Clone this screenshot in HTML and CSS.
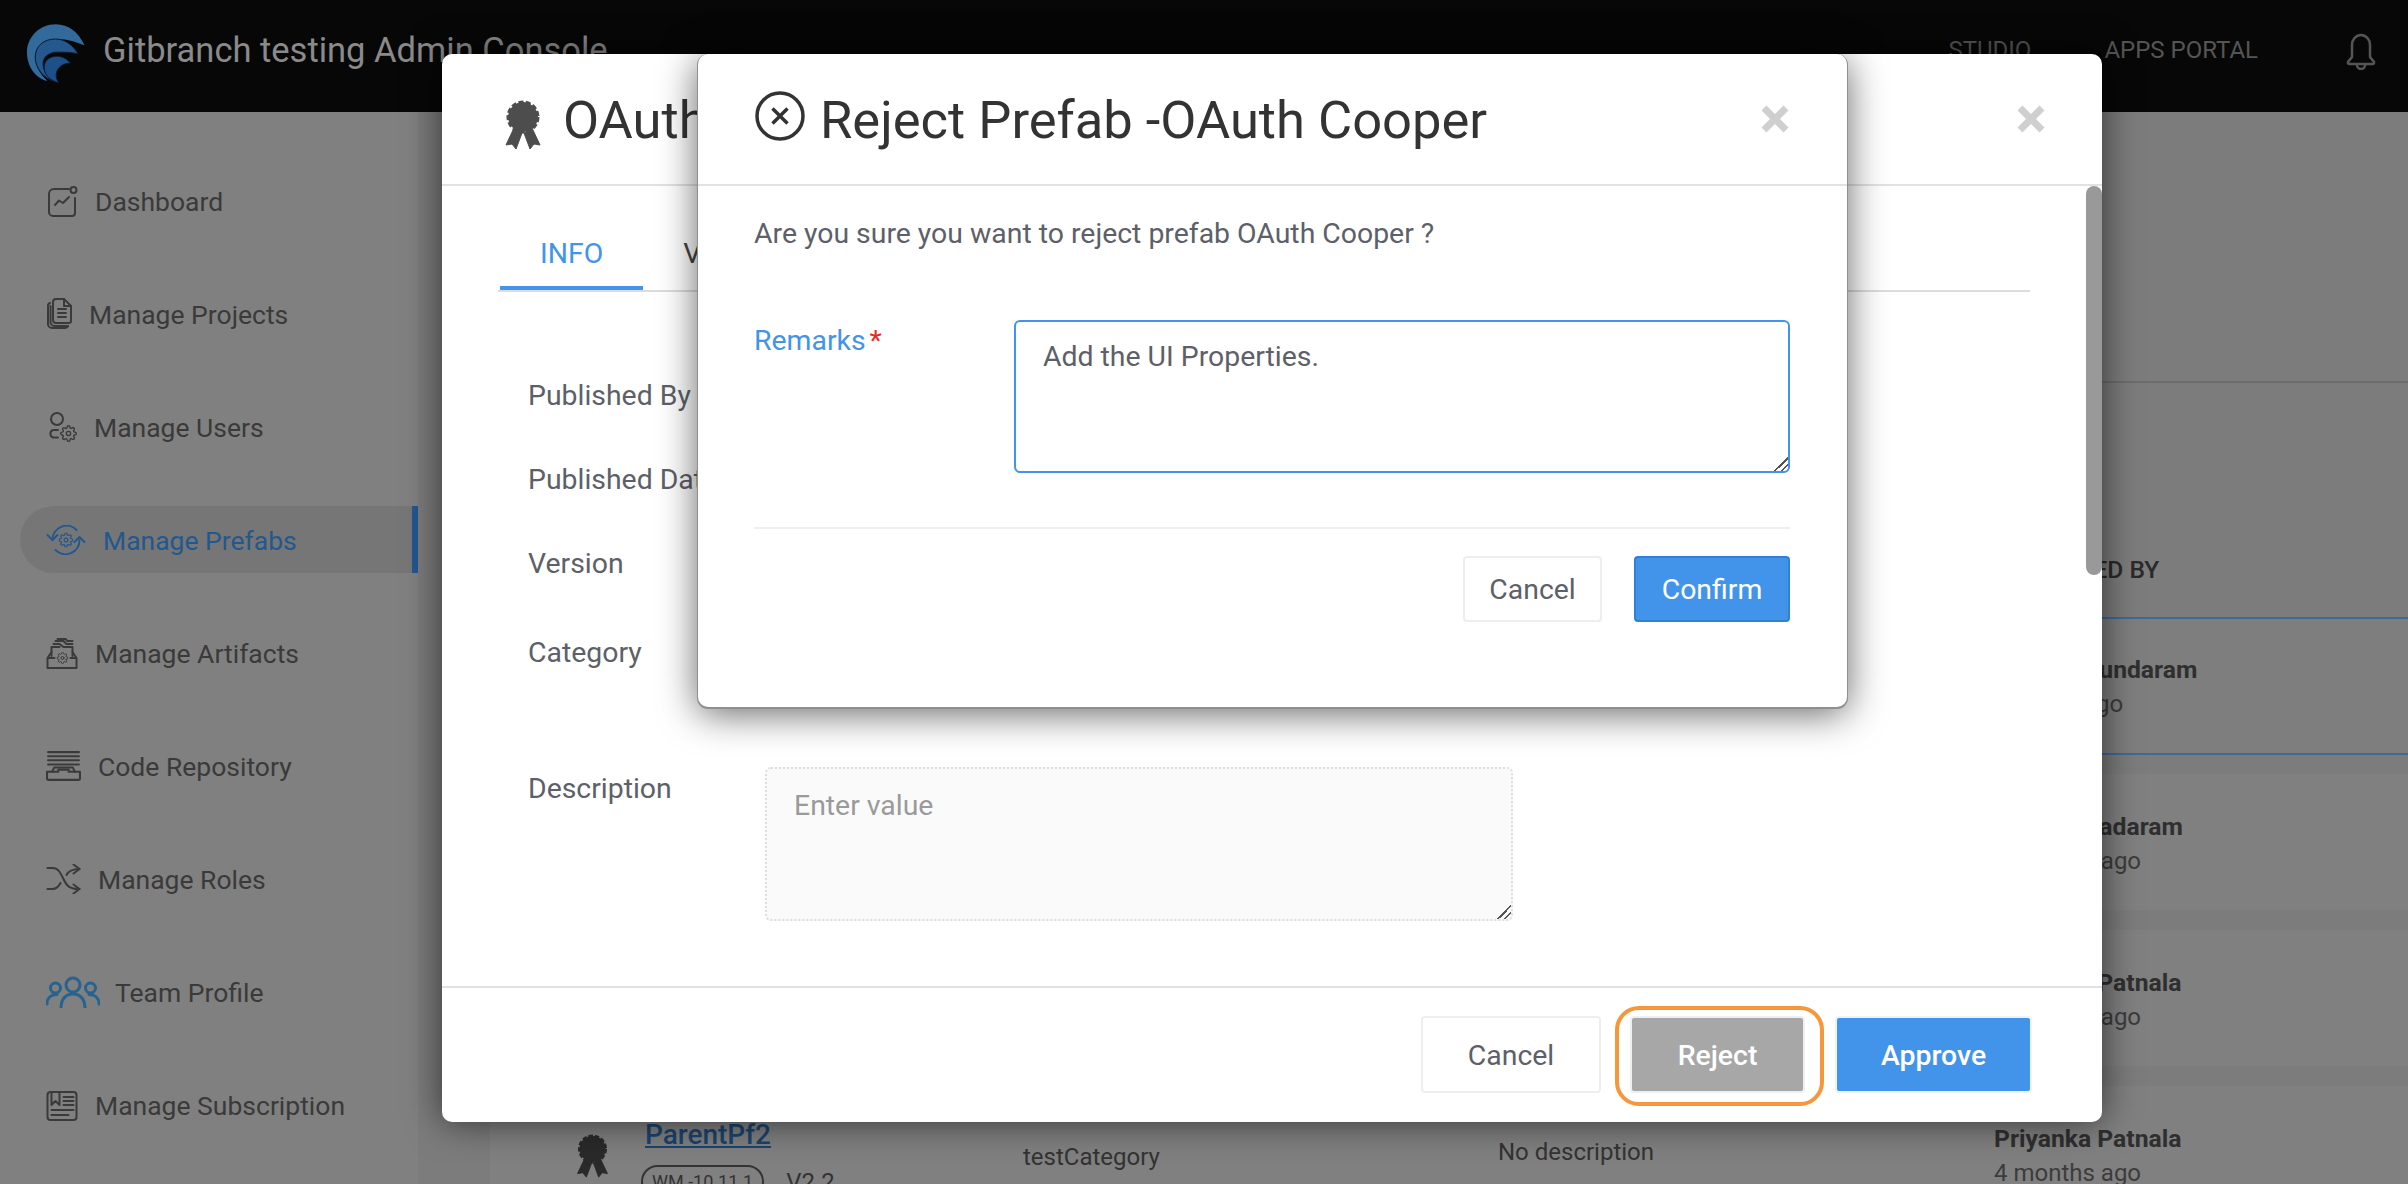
FILE: index.html
```html
<!DOCTYPE html>
<html lang="en">
<head>
    <meta charset="UTF-8">
    <title>Gitbranch testing Admin Console</title>
    <link rel="stylesheet" href="styles.css">
</head>
<body>
    <svg class="defs" width="0" height="0">
        <symbol id="gear" viewBox="0 0 24 24">
            <circle cx="12" cy="12" r="3"/>
            <path d="M19.4 15a1.65 1.65 0 0 0 .33 1.82l.06.06a2 2 0 0 1 0 2.83 2 2 0 0 1-2.83 0l-.06-.06a1.65 1.65 0 0 0-1.82-.33 1.65 1.65 0 0 0-1 1.51V21a2 2 0 0 1-2 2 2 2 0 0 1-2-2v-.09A1.65 1.65 0 0 0 9 19.4a1.65 1.65 0 0 0-1.82.33l-.06.06a2 2 0 0 1-2.83 0 2 2 0 0 1 0-2.83l.06-.06a1.65 1.65 0 0 0 .33-1.82 1.65 1.65 0 0 0-1.51-1H3a2 2 0 0 1-2-2 2 2 0 0 1 2-2h.09A1.65 1.65 0 0 0 4.6 9a1.65 1.65 0 0 0-.33-1.82l-.06-.06a2 2 0 0 1 0-2.83 2 2 0 0 1 2.83 0l.06.06a1.65 1.65 0 0 0 1.82.33H9a1.65 1.65 0 0 0 1-1.51V3a2 2 0 0 1 2-2 2 2 0 0 1 2 2v.09a1.65 1.65 0 0 0 1 1.51 1.65 1.65 0 0 0 1.82-.33l.06-.06a2 2 0 0 1 2.83 0 2 2 0 0 1 0 2.83l-.06.06a1.65 1.65 0 0 0-.33 1.82V9a1.65 1.65 0 0 0 1.51 1H21a2 2 0 0 1 2 2 2 2 0 0 1-2 2h-.09a1.65 1.65 0 0 0-1.51 1z"/>
        </symbol>
        <symbol id="ribbon" viewBox="0 0 42 50">
            <circle cx="21" cy="17" r="14.5"/>
            <circle class="scallop" cx="21" cy="17" r="15"/>
            <path d="M12 28 L4 45 L10 44 L14 49 L20 33 Z"/>
            <path d="M30 28 L38 45 L32 44 L28 49 L22 33 Z"/>
        </symbol>
    </svg>

    <header class="topbar">
        <div class="brand">
            <svg class="logo" viewBox="30 37 182 184">
                <path fill="#336a9c" d="M208 105 C190 65 160 40 120 40 C70 40 33 80 33 125 C33 170 60 205 95 212 C70 190 55 160 60 130 C65 100 95 85 125 85 C155 85 185 95 208 105Z"/>
                <path fill="#24588f" stroke="#0b1a2a" stroke-width="3" d="M188 130 C170 100 145 85 120 85 C85 85 58 105 58 140 C58 175 85 205 118 215 C95 200 80 180 82 155 C85 135 105 125 125 125 C145 125 170 125 188 130Z"/>
                <path fill="#1d5088" stroke="#0b1a2a" stroke-width="3" d="M165 158 C150 140 130 135 115 138 C95 142 85 155 85 172 C85 195 105 212 130 218 C120 205 118 190 128 175 C135 165 150 158 165 158Z"/>
            </svg>
            <span class="brand-name">Gitbranch testing Admin Console</span>
        </div>
        <nav class="topnav">
            <a class="topnav-link">STUDIO</a>
            <a class="topnav-link">APPS PORTAL</a>
            <svg class="bell" viewBox="0 0 30 37">
                <path d="M6 24 V12 a9 10 0 0 1 18 0 V24 L28 29 a1.5 1.5 0 0 1 -1 2 H3 a1.5 1.5 0 0 1 -1 -2 Z"/>
                <path d="M11 32 a4 4 0 0 0 8 0"/>
            </svg>
        </nav>
    </header>

    <div class="layout">
        <aside class="sidebar">
            <a class="side-link">
                <svg class="ico ico-dash" viewBox="0 0 30 31">
                    <path d="M22 3 H7 a5 5 0 0 0 -5 5 V26 a4 4 0 0 0 4 4 H25 a3 3 0 0 0 3 -3 V12"/>
                    <circle cx="26.5" cy="4" r="3"/>
                    <path d="M8 19 L12 14.5 L16 17 L22 11"/>
                </svg>
                Dashboard
            </a>
            <a class="side-link">
                <svg class="ico ico-proj" viewBox="0 0 26 32">
                    <path d="M10 1 H18 L25 8 V23 a2 2 0 0 1 -2 2 H10 a3 3 0 0 1 -3 -3 V4 a3 3 0 0 1 3 -3 Z"/>
                    <path d="M18 1 V8 H25"/>
                    <path d="M12 11 H20 M12 15 H20 M12 19 H20"/>
                    <path d="M4 5 a3 3 0 0 0 -2 3 V26 a4 4 0 0 0 4 4 H19 a3 3 0 0 0 3 -2"/>
                    <path d="M4.5 8 V24 a4 4 0 0 0 4 4 H22"/>
                </svg>
                Manage Projects
            </a>
            <a class="side-link">
                <svg class="ico ico-user" viewBox="0 0 31 30">
                    <circle cx="11" cy="7" r="6"/>
                    <path d="M12 18 H7 a4 4 0 0 0 0 7.5 H12"/>
                    <use href="#gear" x="14" y="13" width="17" height="17"/>
                </svg>
                Manage Users
            </a>
            <a class="side-link side-link-active">
                <svg class="ico ico-prefab" viewBox="0 0 39 30">
                    <path d="M6 15 A14 14 0 0 1 30 5"/>
                    <path d="M1 10 L6 15 L11 10"/>
                    <path d="M33 15 A14 14 0 0 1 9 25"/>
                    <path d="M28 17 L33 12 L38 17"/>
                    <use href="#gear" x="12" y="7.5" width="15" height="15"/>
                </svg>
                Manage Prefabs
            </a>
            <a class="side-link">
                <svg class="ico ico-dash" viewBox="0 0 31 31">
                    <path d="M1 20 V30 H30 V20 H24 M1 20 H8 M1 20 L5 14 M30 20 L26 14"/>
                    <path d="M5 18 V9 H13 M26 18 V9 H17 L13 6 H7"/>
                    <path d="M9 3 H17 L20 6 H26 M11 1 H19 L21 3 H26"/>
                    <use href="#gear" x="10" y="14" width="12" height="12"/>
                </svg>
                Manage Artifacts
            </a>
            <a class="side-link">
                <svg class="ico ico-code" viewBox="0 0 34 29">
                    <path d="M2 1 H32 M2 5 H32 M2 9 H32 M2 13 H32"/>
                    <path d="M1 20 H12 V18 H22 V20 H33 V27 a1 1 0 0 1 -1 1 H2 a1 1 0 0 1 -1 -1 Z"/>
                    <path d="M6 20 L8 16 H26 L28 20"/>
                </svg>
                Code Repository
            </a>
            <a class="side-link">
                <svg class="ico ico-code" viewBox="0 0 34 30">
                    <path d="M1 4 H6 C12 4 14 9 17 15 C20 22 23 25 33 25"/>
                    <path d="M1 25 H6 C10 25 12 23 14 19"/>
                    <path d="M20 11 C22 7 25 5 33 5"/>
                    <path d="M27 0.5 L33 5 L27 9.5"/>
                    <path d="M27 20.5 L33 25 L27 29.5"/>
                </svg>
                Manage Roles
            </a>
            <a class="side-link">
                <svg class="ico ico-team" viewBox="0 0 54 32">
                    <circle cx="27" cy="9" r="7"/>
                    <path d="M15 32 C15 23 20 18 27 18 C34 18 39 23 39 32"/>
                    <circle cx="9.5" cy="12" r="5"/>
                    <path d="M1 28 C1 22 5 18.5 11 18.5"/>
                    <circle cx="44.5" cy="12" r="5"/>
                    <path d="M53 28 C53 22 49 18.5 43 18.5"/>
                </svg>
                Team Profile
            </a>
            <a class="side-link">
                <svg class="ico ico-dash" viewBox="0 0 31 31">
                    <rect x="1" y="2" width="29" height="28" rx="3"/>
                    <path d="M5 2 V15 L9 11 L13 15 V2"/>
                    <path d="M17 7 H27 M17 11 H27 M17 15 H27 M5 20 H27 M5 25 H22"/>
                </svg>
                Manage Subscription
            </a>
        </aside>

        <main class="content">
            <div class="content-head"></div>
            <div class="table-head">PUBLISHED BY</div>
            <div class="prefab-row prefab-row-active">
                <div class="by-cell">
                    <div class="by-name">Priyank Sundaram</div>
                    <div class="by-time">12 days ago</div>
                </div>
            </div>
            <div class="prefab-row">
                <div class="by-cell">
                    <div class="by-name">Priyank Sadaram</div>
                    <div class="by-time">4 months ago</div>
                </div>
            </div>
            <div class="prefab-row">
                <div class="by-cell">
                    <div class="by-name">Priyanka Patnala</div>
                    <div class="by-time">4 months ago</div>
                </div>
            </div>
            <div class="prefab-row">
                <div class="name-cell">
                    <svg class="row-ribbon"><use href="#ribbon"/></svg>
                    <div>
                        <a class="prefab-link">ParentPf2</a>
                        <div class="prefab-meta">
                            <span class="pill">WM -10.11.1</span>
                            <span class="prefab-ver">V2.2</span>
                        </div>
                    </div>
                </div>
                <div class="cat-cell">testCategory</div>
                <div class="desc-cell">No description</div>
                <div class="by-cell">
                    <div class="by-name">Priyanka Patnala</div>
                    <div class="by-time">4 months ago</div>
                </div>
            </div>
        </main>
    </div>

    <!-- prefab details dialog -->
    <section class="modal modal-outer">
        <div class="modal-head">
            <div class="modal-title">
                <svg class="title-ribbon"><use href="#ribbon"/></svg>
                <h2 class="title-text">OAuth Cooper</h2>
            </div>
            <svg class="close-x" viewBox="0 0 28 28"><path d="M3 3 L25 25 M25 3 L3 25"/></svg>
        </div>
        <div class="outer-body">
            <div class="tabs">
                <a class="tab tab-active">INFO</a>
                <a class="tab">VERSIONS</a>
            </div>
            <div class="info-form">
                <div class="info-row"><label class="info-label">Published By</label></div>
                <div class="info-row"><label class="info-label">Published Date</label></div>
                <div class="info-row"><label class="info-label">Version</label></div>
                <div class="info-row info-row-cat">
                    <label class="info-label">Category</label>
                    <div class="cat-box"></div>
                </div>
                <div class="info-row">
                    <label class="info-label info-label-desc">Description</label>
                    <textarea class="desc-input" placeholder="Enter value"></textarea>
                </div>
            </div>
        </div>
        <div class="outer-foot">
            <button class="btn btn-plain btn-foot-cancel">Cancel</button>
            <button class="btn btn-reject">Reject</button>
            <button class="btn btn-approve">Approve</button>
        </div>
        <div class="scroll-thumb"></div>
    </section>

    <!-- reject confirmation -->
    <section class="modal modal-inner">
        <div class="modal-head">
            <div class="modal-title">
                <svg class="title-circle" viewBox="0 0 50 50">
                    <circle cx="25" cy="25" r="23"/>
                    <path d="M17.5 17.5 L32.5 32.5 M32.5 17.5 L17.5 32.5"/>
                </svg>
                <h2 class="title-text">Reject Prefab -OAuth Cooper</h2>
            </div>
            <svg class="close-x" viewBox="0 0 28 28"><path d="M3 3 L25 25 M25 3 L3 25"/></svg>
        </div>
        <div class="inner-body">
            <p class="confirm-msg">Are you sure you want to reject prefab OAuth Cooper ?</p>
            <div class="remarks-row">
                <label class="remarks-label">Remarks<span class="req">*</span></label>
                <textarea class="remarks-input">Add the UI Properties.</textarea>
            </div>
            <div class="inner-foot">
                <button class="btn btn-plain btn-small-cancel">Cancel</button>
                <button class="btn btn-confirm">Confirm</button>
            </div>
        </div>
    </section>
</body>
</html>
```

FILE: styles.css
```css
* {
    box-sizing: border-box;
}
html, body {
    margin: 0;
    height: 1184px;
    overflow: hidden;
}
body {
    font-family: Roboto, "Liberation Sans", sans-serif;
    background-color: #808080;
    color: #3a3a3a;
}
.defs {
    position: absolute;
}
.scallop {
    fill: none;
    stroke: inherit;
    stroke-width: 3;
    stroke-dasharray: 5 2.3;
}

/* top bar */
.topbar {
    height: 112px;
    background-color: #070707;
    display: flex;
    align-items: center;
    justify-content: space-between;
    padding: 0 32px 0 26px;
}
.brand {
    display: flex;
    align-items: center;
    gap: 17px;
}
.logo {
    width: 60px;
    height: 61px;
    margin-top: -6px;
}
.brand-name {
    font-size: 34.5px;
    color: #8a8a8a;
    margin-top: -12px;
}
.topnav {
    display: flex;
    align-items: center;
}
.topnav-link {
    font-size: 24px;
    color: #555;
    margin-right: 73px;
    margin-top: -12px;
}
.topnav-link + .topnav-link {
    margin-right: 88px;
}
.bell {
    width: 30px;
    height: 37px;
    margin-top: -10px;
    fill: none;
    stroke: #555;
    stroke-width: 2.5;
}

/* sidebar */
.layout {
    display: flex;
    height: 1072px;
}
.sidebar {
    width: 418px;
    flex: none;
    padding: 55px 0 0 20px;
}
.side-link {
    display: flex;
    align-items: center;
    gap: 17px;
    height: 67px;
    margin-bottom: 46px;
    padding: 1px 0 0 26px;
    font-size: 26.5px;
    color: #3a3a3a;
}
.side-link-active {
    background-color: #767676;
    border-right: 6px solid #23578f;
    border-radius: 34px 0 0 34px;
    color: #23588f;
}
.ico {
    fill: none;
    stroke: #3a3a3a;
    stroke-width: 2;
    stroke-linecap: round;
    stroke-linejoin: round;
    flex: none;
}
.ico-dash {
    width: 32px;
    height: 31px;
}
.ico-proj {
    width: 26px;
    height: 32px;
}
.ico-user {
    width: 31px;
    height: 30px;
}
.ico-prefab {
    width: 40px;
    height: 30px;
    stroke: #23588f;
}
.ico-code {
    width: 35px;
    height: 30px;
}
.ico-team {
    width: 54px;
    height: 32px;
    margin-right: -2px;
    stroke: #26648f;
    stroke-width: 3;
}

/* list behind the dialogs */
.content {
    flex: 1;
    background-color: #7c7c7c;
    padding-left: 72px;
    min-width: 0;
}
.content-head {
    height: 271px;
    border-bottom: 2px solid #6c6c6c;
}
.table-head {
    height: 234px;
    padding: 172px 0 0 1504px;
    font-size: 24.5px;
    font-weight: 500;
    color: #2a2a2a;
    line-height: 30px;
}
.prefab-row {
    display: grid;
    grid-template-columns: 533px 475px 496px 1fr;
    height: 136px;
    margin-bottom: 20px;
    background-color: #808080;
}
.prefab-row-active {
    border-top: 2px solid #3f6a96;
    border-bottom: 2px solid #3f6a96;
    height: 138px;
    margin-bottom: 19px;
    background-color: #7e7e7e;
}
.by-cell {
    grid-column: 4;
    padding-top: 38px;
}
.prefab-row-active .by-cell {
    padding-top: 36px;
}
.by-name {
    font-size: 24.7px;
    font-weight: 700;
    line-height: 30px;
    color: #2f2f2f;
}
.by-time {
    font-size: 24px;
    line-height: 38px;
    color: #3c3c3c;
}
.name-cell {
    display: flex;
    padding: 32px 0 0 84px;
    gap: 30px;
}
.row-ribbon {
    width: 37px;
    height: 46px;
    margin-top: 15px;
    fill: #2a2a2a;
    stroke: #2a2a2a;
}
.prefab-link {
    font-size: 28px;
    font-weight: 500;
    line-height: 34px;
    color: #1b4470;
    text-decoration: underline;
    display: block;
    margin-left: 4px;
}
.prefab-meta {
    display: flex;
    align-items: center;
    gap: 22px;
    margin-top: 13px;
}
.pill {
    border: 2px solid #333;
    border-radius: 20px;
    font-size: 18px;
    padding: 4px 9px;
    color: #333;
    white-space: nowrap;
}
.prefab-ver {
    font-size: 24px;
    color: #333;
}
.cat-cell {
    padding-top: 56px;
    font-size: 24px;
    line-height: 30px;
    color: #333;
}
.desc-cell {
    padding-top: 51px;
    font-size: 24px;
    line-height: 30px;
    color: #333;
}

/* dialogs */
.modal {
    position: absolute;
    top: 54px;
    background-color: #fff;
    border-radius: 10px;
    display: flex;
    flex-direction: column;
    overflow: hidden;
}
.modal-outer {
    left: 442px;
    width: 1660px;
    height: 1068px;
    box-shadow: 0 0 36px rgba(0, 0, 0, 0.6);
    overflow: visible;
}
.modal-inner {
    left: 698px;
    width: 1149px;
    height: 653px;
    box-shadow: 0 1px 0 1px #8f8f8f, 0 6px 38px rgba(0, 0, 0, 0.62);
}
.modal-head {
    height: 132px;
    flex: none;
    border-bottom: 2px solid #e2e2e2;
    display: flex;
    align-items: center;
    justify-content: space-between;
    padding: 0 58px 0 57px;
}
.modal-outer .modal-head {
    padding: 0 57px 0 60px;
}
.modal-title {
    display: flex;
    align-items: center;
}
.title-text {
    margin: 2px 0 0;
    font-size: 52.5px;
    font-weight: 400;
    color: #333;
    line-height: 60px;
    white-space: nowrap;
}
.title-ribbon {
    width: 42px;
    height: 50px;
    margin: 12px 19px 0 0;
    fill: #4d4d4d;
    stroke: #4d4d4d;
}
.title-circle {
    width: 50px;
    height: 50px;
    margin: -6px 15px 0 0;
    fill: none;
    stroke: #333;
    stroke-width: 3.5;
}
.close-x {
    width: 28px;
    height: 28px;
    fill: none;
    stroke: #cfcfcf;
    stroke-width: 7;
}

/* details dialog */
.outer-body {
    flex: 1;
    padding: 0 72px 0 56px;
}
.tabs {
    height: 106px;
    padding-left: 2px;
    display: flex;
    align-items: flex-end;
    border-bottom: 2px solid #dcdcdc;
    position: relative;
}
.tab {
    font-size: 28.4px;
    line-height: 40px;
    height: 70px;
    padding: 14px 40px 0;
    color: #444;
}
.tab-active {
    color: #4194e9;
    border-bottom: 4px solid #4194e9;
}
.info-form {
    padding: 84px 0 0 30px;
}
.info-row {
    display: flex;
    height: 84px;
}
.info-row-cat {
    height: 139px;
    padding-top: 5px;
}
.info-label {
    width: 237px;
    flex: none;
    font-size: 28.4px;
    line-height: 40px;
    color: #5d6068;
}
.info-label-desc {
    padding-top: 2px;
}
.cat-box {
    width: 748px;
    height: 75px;
    border: 2px solid #ccc;
    border-radius: 4px;
    background-color: #f8f8f8;
}
.desc-input {
    width: 748px;
    height: 154px;
    flex: none;
    border: 2px dotted #ddd;
    border-radius: 6px;
    background-color: #fafafa;
    padding: 20px 27px;
    font-family: inherit;
    font-size: 28.4px;
    outline: none;
}
.desc-input::placeholder {
    color: #9a9a9a;
}
.desc-input::-webkit-resizer,
.remarks-input::-webkit-resizer {
    background: linear-gradient(135deg, transparent 52%, #555 52%, #555 60%, transparent 60%, transparent 74%, #555 74%, #555 82%, transparent 82%);
}
.outer-foot {
    height: 136px;
    flex: none;
    border-top: 2px solid #e2e2e2;
    display: flex;
    justify-content: flex-end;
    padding: 28px 70px 0 0;
    border-radius: 0 0 10px 10px;
}
.outer-foot .btn {
    padding-top: 2px;
}
.scroll-thumb {
    position: absolute;
    right: 0;
    top: 132px;
    width: 16px;
    height: 389px;
    border-radius: 8px;
    background-color: #999;
}

/* buttons */
.btn {
    font-family: inherit;
    font-size: 28.4px;
    border: 2px solid transparent;
    border-radius: 4px;
    padding: 0;
    height: 77px;
    cursor: pointer;
}
.btn-plain {
    background-color: #fff;
    border-color: #eee;
    color: #5d6068;
}
.btn-foot-cancel {
    width: 180px;
}
.btn-reject {
    position: relative;
    width: 175px;
    margin-left: 29px;
    background-color: #a7a7a7;
    border-color: #efefef;
    color: #fff;
    font-weight: 500;
}
.btn-reject::after {
    content: "";
    position: absolute;
    top: -12px;
    bottom: -15px;
    left: -17px;
    right: -21px;
    border: 4px solid #f7963a;
    border-radius: 24px;
}
.btn-approve {
    width: 197px;
    margin-left: 30px;
    background-color: #4194e9;
    border-color: #eef3f8;
    color: #fff;
    font-weight: 500;
}

/* reject dialog */
.inner-body {
    padding: 28px 57px 0 56px;
}
.confirm-msg {
    margin: 0;
    font-size: 28.4px;
    line-height: 40px;
    color: #5d6068;
}
.remarks-row {
    display: flex;
    margin-top: 66px;
}
.remarks-label {
    width: 260px;
    flex: none;
    padding-top: 1px;
    font-size: 28.4px;
    line-height: 40px;
    color: #4194e9;
}
.req {
    color: #e8291c;
    margin-left: 4px;
}
.remarks-input {
    width: 776px;
    height: 153px;
    flex: none;
    border: 2px solid #4194e9;
    border-radius: 6px;
    padding: 18px 27px;
    font-family: inherit;
    font-size: 28.4px;
    color: #5d6068;
    outline: none;
}
.inner-foot {
    margin-top: 54px;
    padding-top: 27px;
    border-top: 2px solid #eee;
    display: flex;
    justify-content: flex-end;
    gap: 32px;
}
.inner-foot .btn {
    height: 66px;
    padding-top: 1px;
}
.btn-small-cancel {
    width: 139px;
}
.btn-confirm {
    width: 156px;
    background-color: #4194e9;
    border-color: #2f80d6;
    color: #fff;
}
```
